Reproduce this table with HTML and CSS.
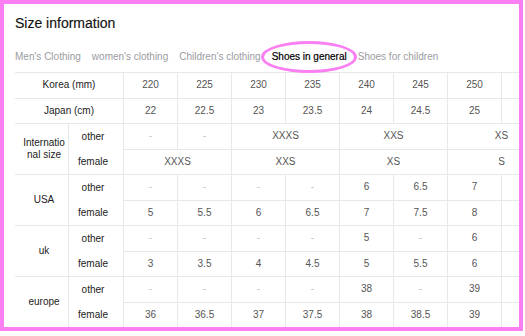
FILE: index.html
```html
<!DOCTYPE html>
<html lang="en">
<head>
<meta charset="utf-8">
<title>Size information</title>
<link rel="stylesheet" href="styles.css">
</head>
<body>
<div class="frame">
  <h1 class="title">Size information</h1>
  <nav class="tabs">
    <span class="tab">Men's Clothing</span>
    <span class="tab">women's clothing</span>
    <span class="tab">Children's clothing</span>
    <span class="tab active">Shoes in general<span class="ring"></span></span>
    <span class="tab">Shoes for children</span>
  </nav>
  <table class="sizes">
    <colgroup>
      <col class="c-label"><col class="c-sub">
      <col class="c-data"><col class="c-data"><col class="c-data"><col class="c-data">
      <col class="c-data"><col class="c-data"><col class="c-data"><col class="c-data">
    </colgroup>
    <tbody>
      <tr>
        <td class="head" colspan="2">Korea (mm)</td>
        <td>220</td><td>225</td><td>230</td><td>235</td><td>240</td><td>245</td><td>250</td><td></td>
      </tr>
      <tr>
        <td class="head" colspan="2">Japan (cm)</td>
        <td>22</td><td>22.5</td><td>23</td><td>23.5</td><td>24</td><td>24.5</td><td>25</td><td></td>
      </tr>
      <tr>
        <td class="group" rowspan="2">International size</td>
        <td class="sub first">other</td>
        <td class="dash">-</td><td class="dash">-</td><td colspan="2">XXXS</td><td colspan="2">XXS</td><td colspan="2">XS</td>
      </tr>
      <tr>
        <td class="sub">female</td>
        <td colspan="2">XXXS</td><td colspan="2">XXS</td><td colspan="2">XS</td><td colspan="2">S</td>
      </tr>
      <tr>
        <td class="group" rowspan="2">USA</td>
        <td class="sub first">other</td>
        <td class="dash">-</td><td class="dash">-</td><td class="dash">-</td><td class="dash">-</td><td>6</td><td>6.5</td><td>7</td><td></td>
      </tr>
      <tr>
        <td class="sub">female</td>
        <td>5</td><td>5.5</td><td>6</td><td>6.5</td><td>7</td><td>7.5</td><td>8</td><td></td>
      </tr>
      <tr>
        <td class="group" rowspan="2">uk</td>
        <td class="sub first">other</td>
        <td class="dash">-</td><td class="dash">-</td><td class="dash">-</td><td class="dash">-</td><td>5</td><td class="dash">-</td><td>6</td><td></td>
      </tr>
      <tr>
        <td class="sub">female</td>
        <td>3</td><td>3.5</td><td>4</td><td>4.5</td><td>5</td><td>5.5</td><td>6</td><td></td>
      </tr>
      <tr>
        <td class="group" rowspan="2">europe</td>
        <td class="sub first">other</td>
        <td class="dash">-</td><td class="dash">-</td><td class="dash">-</td><td class="dash">-</td><td>38</td><td class="dash">-</td><td>39</td><td></td>
      </tr>
      <tr>
        <td class="sub">female</td>
        <td>36</td><td>36.5</td><td>37</td><td>37.5</td><td>38</td><td>38.5</td><td>39</td><td></td>
      </tr>
    </tbody>
  </table>
</div>
</body>
</html>
```

FILE: styles.css
```css
* { box-sizing: border-box; }

html, body {
  margin: 0;
  background: #ffffff;
}

body {
  font-family: "Liberation Sans", Arial, sans-serif;
}

.frame {
  width: 523px;
  height: 331px;
  border: 4px solid #f97ff2;
  padding: 9px 11px 0;
  overflow: hidden;
  background: #ffffff;
}

.title {
  margin: 0;
  font-size: 14px;
  line-height: 20px;
  font-weight: normal;
  color: #111111;
  -webkit-text-stroke: 0.15px #111111;
}

.tabs {
  display: flex;
  gap: 11px;
  margin-top: 17px;
  margin-bottom: 8px;
  font-size: 10px;
  line-height: 14px;
  white-space: nowrap;
}

.tab {
  color: #9a9ca2;
}

.tab.active {
  position: relative;
  color: #000000;
  -webkit-text-stroke: 0.2px #000000;
}

.ring {
  position: absolute;
  top: -9px;
  bottom: -9px;
  left: -11px;
  right: -10px;
  border: 3px solid #f97ff2;
  border-radius: 50%;
}

.sizes {
  border-collapse: separate;
  border-spacing: 0;
  table-layout: fixed;
  width: 541px;
  border-top: 1px solid #e8e8e8;
  font-size: 10px;
  line-height: 12.5px;
  color: #555555;
}

.c-label { width: 54px; }
.c-sub { width: 55px; }
.c-data { width: 54px; }

.sizes tr {
  height: 25.5px;
}

.sizes td {
  padding: 0;
  text-align: center;
  vertical-align: middle;
  border-right: 1px solid #e8e8e8;
  border-bottom: 1px solid #e8e8e8;
}

.sizes td.head {
  color: #222222;
}

.sizes td.group {
  color: #222222;
  padding: 0 2px 0 7px;
  word-break: break-all;
}

.sizes td.sub {
  color: #222222;
  padding-right: 6px;
}

.sizes td.sub.first {
  border-bottom: none;
}

.sizes td.dash {
  color: #c4c4c4;
}
```
